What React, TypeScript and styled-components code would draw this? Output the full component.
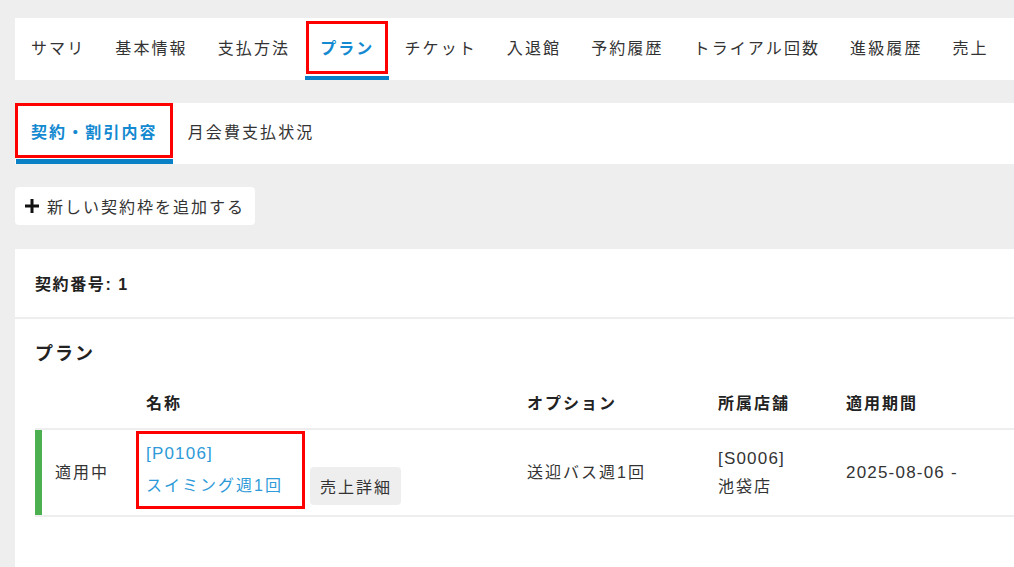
import React from 'react';
import styled, { createGlobalStyle, css } from 'styled-components';

const GlobalStyle = createGlobalStyle`
    html, body {
        margin: 0;
        padding: 0;
        background: #eeeeee;
        overflow: hidden;
    }
    body {
        font-family: "Liberation Sans", "Noto Sans CJK JP", sans-serif;
        font-size: 16px;
        letter-spacing: 2px;
        color: #333333;
    }
`;

const BLUE = '#1289d0';
const LINK = '#2e9ad8';
const MARK = '#ff0000';

const Page = styled.div`
    display: flex;
    flex-direction: column;
    align-items: flex-start;
    padding: 18px 0 0 15px;
`;

const TabBar = styled.nav<{ $height: number }>`
    display: flex;
    align-self: stretch;
    height: ${({ $height }) => $height}px;
    padding-left: 1px;
    background: #ffffff;
`;

interface PropsTab {
    $active?: boolean;
    $underline: number;
    $mark?: 'inset' | 'full';
}
const Tab = styled.div<PropsTab>`
    position: relative;
    display: flex;
    align-items: center;
    padding: 0 15px;
    white-space: nowrap;
    letter-spacing: 2.1px;
    color: #333333;
    box-sizing: border-box;
    border-bottom: ${({ $underline }) => $underline}px solid transparent;

    ${({ $active }) =>
        $active &&
        css`
            color: ${BLUE};
            font-weight: bold;
            border-bottom-color: #0a80c6;
        `}

    ${({ $mark }) => {
        switch ($mark) {
            case 'inset':
                return css`
                    &::before {
                        content: '';
                        position: absolute;
                        left: 1px;
                        right: 1px;
                        top: 3px;
                        bottom: 2px;
                        border: 3px solid ${MARK};
                    }
                `;
            case 'full':
                return css`
                    &::before {
                        content: '';
                        position: absolute;
                        left: -1px;
                        right: 0;
                        top: 0;
                        bottom: 1px;
                        border: 3px solid ${MARK};
                    }
                `;
            default:
                return null;
        }
    }}
`;

const AddButton = styled.button`
    display: flex;
    align-items: center;
    gap: 8px;
    height: 38px;
    margin: 23px 0 24px;
    padding: 0 10px;
    border: none;
    border-radius: 4px;
    background: #ffffff;
    font: inherit;
    letter-spacing: inherit;
    color: #333333;
    cursor: pointer;
`;

const Card = styled.section`
    align-self: stretch;
    background: #ffffff;
    min-height: 330px;
`;

const CardHeader = styled.div`
    display: flex;
    align-items: center;
    height: 68px;
    padding: 0 20px;
    font-weight: bold;
    color: #222222;
    letter-spacing: 1.6px;
    border-bottom: 2px solid #eeeeee;
`;

const Section = styled.div`
    padding: 22px 0 0 20px;
`;

const SectionTitle = styled.h3`
    margin: 0 0 13px;
    font-size: 18px;
    line-height: 26px;
    letter-spacing: 2px;
    color: #222222;
`;

const Row = styled.div<{ $head?: boolean }>`
    display: grid;
    grid-template-columns: 101px 381px 191px 128px 1fr;
    border-bottom: 2px solid #eeeeee;
    min-height: ${({ $head }) => ($head ? 48 : 85)}px;

    ${({ $head }) =>
        $head &&
        css`
            font-weight: bold;
            color: #222222;
        `}
`;

const Cell = styled.div<{ $status?: boolean }>`
    display: flex;
    flex-direction: column;
    justify-content: center;
    padding: 0 10px;
    line-height: 28px;

    ${({ $status }) =>
        $status &&
        css`
            border-left: 7px solid #4caf50;
            padding-left: 13px;
        `}
`;

const Num = styled.span`
    font-size: 17px;
    letter-spacing: 1.2px;
`;

const NameCell = styled.div`
    display: flex;
    align-items: flex-end;
    gap: 5px;
    padding: 1px 0 6px;
`;

const LinkBox = styled.div`
    display: flex;
    flex-direction: column;
    padding: 4px 19px 4px 7px;
    border: 3px solid ${MARK};
    line-height: 32px;
`;

const Link = styled.a`
    color: ${LINK};
    text-decoration: none;
`;

const SmallButton = styled.button`
    height: 38px;
    margin-bottom: 4px;
    padding: 0 9px 0 10px;
    border: none;
    border-radius: 4px;
    background: #eeeeee;
    font: inherit;
    letter-spacing: inherit;
    color: #333333;
`;

const PlusIcon = () => (
    <svg width="14" height="14" viewBox="0 0 14 14" aria-hidden>
        <path d="M7 0v14M0 7h14" stroke="#111" strokeWidth="3" />
    </svg>
);

const mainTabs = ['サマリ', '基本情報', '支払方法', 'プラン', 'チケット', '入退館', '予約履歴', 'トライアル回数', '進級履歴', '売上'];

export default function App() {
    return (
        <>
            <GlobalStyle />
            <Page>
                <TabBar $height={62}>
                    {mainTabs.map((t) => (
                        <Tab key={t} $underline={4} $active={t === 'プラン'} $mark={t === 'プラン' ? 'inset' : undefined}>
                            {t}
                        </Tab>
                    ))}
                </TabBar>

                <TabBar $height={61} style={{ marginTop: 23 }}>
                    <Tab $underline={5} $active $mark="full">
                        契約・割引内容
                    </Tab>
                    <Tab $underline={5}>月会費支払状況</Tab>
                </TabBar>

                <AddButton>
                    <PlusIcon />
                    新しい契約枠を追加する
                </AddButton>

                <Card>
                    <CardHeader>契約番号: 1</CardHeader>
                    <Section>
                        <SectionTitle>プラン</SectionTitle>
                        <Row $head>
                            <Cell />
                            <Cell>名称</Cell>
                            <Cell>オプション</Cell>
                            <Cell>所属店舗</Cell>
                            <Cell>適用期間</Cell>
                        </Row>
                        <Row>
                            <Cell $status>適用中</Cell>
                            <NameCell>
                                <LinkBox>
                                    <Link href="#">
                                        <Num>[P0106]</Num>
                                    </Link>
                                    <Link href="#">スイミング週1回</Link>
                                </LinkBox>
                                <SmallButton>売上詳細</SmallButton>
                            </NameCell>
                            <Cell>送迎バス週1回</Cell>
                            <Cell>
                                <Num>[S0006]</Num>
                                <span>池袋店</span>
                            </Cell>
                            <Cell>
                                <Num>2025-08-06 -</Num>
                            </Cell>
                        </Row>
                    </Section>
                </Card>
            </Page>
        </>
    );
}
